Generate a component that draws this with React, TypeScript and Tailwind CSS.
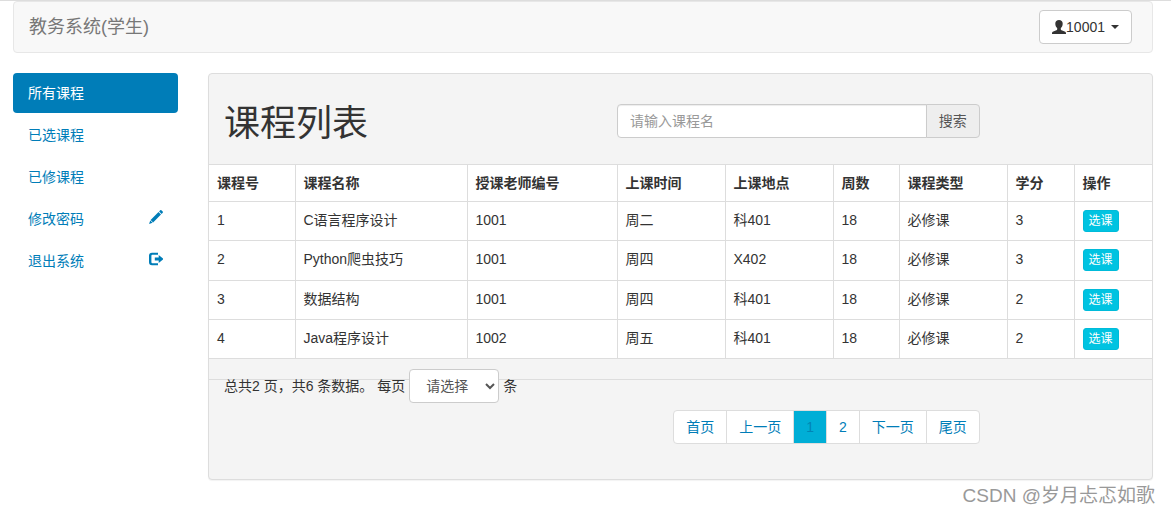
import { useState } from 'react';
import clsx from 'clsx';

interface Course {
  id: number;
  name: string;
  teacherId: string;
  day: string;
  room: string;
  weeks: number;
  type: string;
  credit: number;
}

const courses: Course[] = [
  { id: 1, name: 'C语言程序设计', teacherId: '1001', day: '周二', room: '科401', weeks: 18, type: '必修课', credit: 3 },
  { id: 2, name: 'Python爬虫技巧', teacherId: '1001', day: '周四', room: 'X402', weeks: 18, type: '必修课', credit: 3 },
  { id: 3, name: '数据结构', teacherId: '1001', day: '周四', room: '科401', weeks: 18, type: '必修课', credit: 2 },
  { id: 4, name: 'Java程序设计', teacherId: '1002', day: '周五', room: '科401', weeks: 18, type: '必修课', credit: 2 },
];

const columns = [
  { title: '课程号', width: 'w-[86px]' },
  { title: '课程名称', width: 'w-[172px]' },
  { title: '授课老师编号', width: 'w-[150px]' },
  { title: '上课时间', width: 'w-[108px]' },
  { title: '上课地点', width: 'w-[108px]' },
  { title: '周数', width: 'w-[66px]' },
  { title: '课程类型', width: 'w-[108px]' },
  { title: '学分', width: 'w-[67px]' },
  { title: '操作', width: 'w-[78px]' },
];

const pages = ['首页', '上一页', '1', '2', '下一页', '尾页'];

function UserIcon() {
  return (
    <svg viewBox="0 0 14 14" className="size-[14px]" fill="currentColor" aria-hidden="true">
      <path d="M7 0C4.800 0 3.300 1.300 3.300 3.500c0 1.900.7 3.600 1.900 4.600v1.100c0 .5-.3.9-.8 1.100L1.300 11.500C.4 11.900 0 12.400 0 13.200v.8h14v-.8c0-.8-.4-1.300-1.300-1.700l-3.100-1.200c-.5-.2-.8-.6-.8-1.100V8.100c1.200-1 1.900-2.700 1.900-4.600C10.700 1.300 9.200 0 7 0z" />
    </svg>
  );
}

function PencilIcon() {
  return (
    <svg viewBox="0 0 14 14" className="size-[14px]" fill="currentColor" aria-hidden="true">
      <path d="M11.200.3a.9.900 0 0 1 1.200 0l1.300 1.300a.9.900 0 0 1 0 1.200l-1.100 1.100-2.500-2.500zM9.500 2l2.500 2.500-7.900 7.900-2.500-2.500zM1.200 10.400l2.400 2.400L.1 13.900z" />
    </svg>
  );
}

function LogoutIcon() {
  return (
    <svg viewBox="0 0 14 14" className="size-[14px]" fill="currentColor" aria-hidden="true">
      <path d="M3 .7h6v2H3.400a1 1 0 0 0-1 1v6.600a1 1 0 0 0 1 1H9v2H3a3 3 0 0 1-3-3V3.700a3 3 0 0 1 3-3z" />
      <path d="M9.700 3.100 14.500 7l-4.800 3.900V8.500H5.800v-3h3.900z" />
    </svg>
  );
}

const menu = [
  { label: '所有课程', icon: null },
  { label: '已选课程', icon: null },
  { label: '已修课程', icon: null },
  { label: '修改密码', icon: <PencilIcon /> },
  { label: '退出系统', icon: <LogoutIcon /> },
];

function Navbar() {
  return (
    <header className="flex items-center justify-between rounded border border-[#e7e7e7] bg-[#f8f8f8] py-2 pr-5 pl-[15px]">
      <a href="#" className="text-lg leading-5 text-[#777]">
        教务系统(学生)
      </a>
      <button
        type="button"
        className="flex h-[34px] items-center rounded border border-[#ccc] bg-white px-3 text-[#333]"
      >
        <UserIcon />
        <span>10001</span>
        <span className="ml-1.5 border-x-4 border-t-4 border-x-transparent border-t-[#333]" />
      </button>
    </header>
  );
}

function Sidebar() {
  const [active, setActive] = useState('所有课程');

  return (
    <nav className="w-[165px] shrink-0">
      <ul className="flex flex-col gap-0.5">
        {menu.map((item) => (
          <li key={item.label}>
            <a
              href="#"
              onClick={() => setActive(item.label)}
              className={clsx(
                'flex justify-between rounded px-[15px] py-[10px]',
                item.label === active ? 'bg-[#007db8] text-white' : 'text-[#007db8]',
              )}
            >
              {item.label}
              <span className="pt-px">{item.icon}</span>
            </a>
          </li>
        ))}
      </ul>
    </nav>
  );
}

function CourseTable() {
  return (
    <table className="h-[195px] w-full table-fixed border-y border-[#ddd] bg-white text-left">
      <thead>
        <tr className="h-[37px]">
          {columns.map((col) => (
            <th key={col.title} className={clsx(col.width, 'border-r border-[#ddd] p-2 font-bold last:border-r-0')}>
              {col.title}
            </th>
          ))}
        </tr>
      </thead>
      <tbody>
        {courses.map((c) => (
          <tr
            key={c.id}
            className="border-t border-[#ddd] align-top *:border-r *:border-[#ddd] *:p-2 *:last:border-r-0"
          >
            <td>{c.id}</td>
            <td>{c.name}</td>
            <td>{c.teacherId}</td>
            <td>{c.day}</td>
            <td>{c.room}</td>
            <td>{c.weeks}</td>
            <td>{c.type}</td>
            <td>{c.credit}</td>
            <td>
              <button
                type="button"
                className="block rounded-[3px] border border-[#00bbd9] bg-[#00c3e1] px-[5px] py-px text-xs leading-[18px] text-white"
              >
                选课
              </button>
            </td>
          </tr>
        ))}
      </tbody>
    </table>
  );
}

function Pagination() {
  return (
    <ul className="flex">
      {pages.map((page) => (
        <li key={page} className="group -ml-px">
          <a
            href="#"
            className={clsx(
              'block border border-[#ddd] px-3 py-1.5 group-first:rounded-l group-last:rounded-r',
              page === '1' ? 'bg-[#00aed6] text-[#0085b5]' : 'bg-white text-[#007db8]',
            )}
          >
            {page}
          </a>
        </li>
      ))}
    </ul>
  );
}

function CoursePanel() {
  return (
    <main className="min-w-0 flex-1 rounded border border-[#ddd] bg-[#f4f4f4] shadow-[0_1px_1px_rgba(0,0,0,0.05)]">
      <div className="grid grid-cols-12 items-end pt-[30px] pb-5">
        <h1 className="col-span-5 px-[15px] text-4xl">课程列表</h1>
        <form className="col-span-5 flex px-[15px] pb-1.5" onSubmit={(e) => e.preventDefault()}>
          <input
            type="text"
            aria-label="课程名"
            placeholder="请输入课程名"
            className="h-[34px] min-w-0 flex-1 rounded-l border border-[#ccc] bg-white px-3 shadow-[inset_0_1px_1px_rgba(0,0,0,0.075)] placeholder:text-[#999]"
          />
          <button
            type="submit"
            className="-ml-px h-[34px] rounded-r border border-[#ccc] bg-[#eee] px-3 text-[#555]"
          >
            搜索
          </button>
        </form>
      </div>

      <CourseTable />

      <div className="mt-5 border-t border-[#ddd] pb-[35px]">
        <div className="-mt-[11px] flex items-center gap-1 px-[15px]">
          <span>总共2 页，共6 条数据。</span>
          <label htmlFor="page-size">每页</label>
          <select
            id="page-size"
            className="h-[34px] w-[90px] rounded border border-[#ccc] bg-white px-3 py-1.5 text-[#555]"
          >
            <option>请选择</option>
            <option>5</option>
            <option>10</option>
          </select>
          <span>条</span>
        </div>
        <div className="mt-[7px] grid grid-cols-12">
          <div className="col-span-10 flex justify-end px-[15px]">
            <Pagination />
          </div>
        </div>
      </div>
    </main>
  );
}

export default function App() {
  return (
    <div className="border-t border-[#ddd] bg-white pr-[18px] pl-[13px] font-['Liberation_Sans','Noto_Sans_CJK_SC',sans-serif] text-sm leading-5 text-[#333]">
      <Navbar />
      <div className="mt-5 flex gap-[30px]">
        <Sidebar />
        <CoursePanel />
      </div>
      <p className="mt-1 -mr-0.5 text-right text-[19px] leading-6 text-[#999]">CSDN @岁月忐忑如歌</p>
    </div>
  );
}
